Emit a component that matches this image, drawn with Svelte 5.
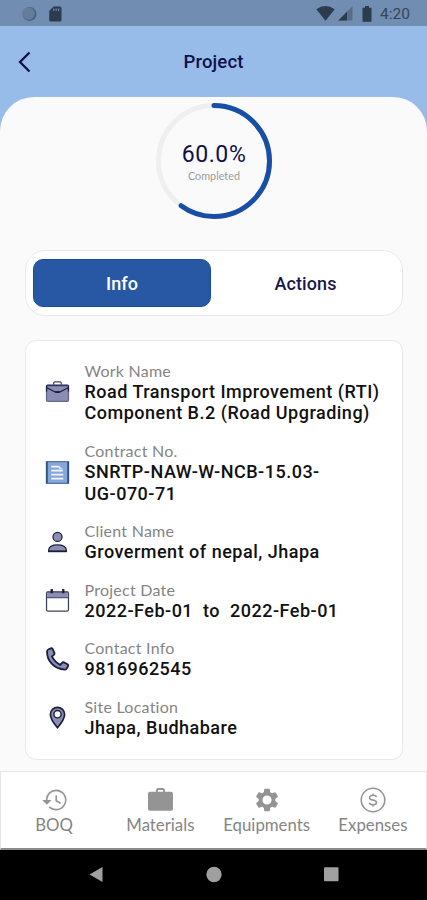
<script>
  let activeTab = $state("info");

  const progress = 60;
  const radius = 55.5;
  const circumference = 2 * Math.PI * radius;

  const details = [
    { icon: "work", label: "Work Name", lines: ["Road Transport Improvement (RTI)", "Component B.2 (Road Upgrading)"] },
    { icon: "contract", label: "Contract No.", lines: ["SNRTP-NAW-W-NCB-15.03-", "UG-070-71"] },
    { icon: "client", label: "Client Name", lines: ["Groverment of nepal, Jhapa"] },
    { icon: "date", label: "Project Date", lines: ["2022-Feb-01  to  2022-Feb-01"] },
    { icon: "phone", label: "Contact Info", lines: ["9816962545"] },
    { icon: "pin", label: "Site Location", lines: ["Jhapa, Budhabare"] },
  ];

  const links = [
    { icon: "history", label: "BOQ" },
    { icon: "bag", label: "Materials" },
    { icon: "gear", label: "Equipments" },
    { icon: "dollar", label: "Expenses" },
  ];
</script>

<div class="screen">
  <div class="status-bar">
    <div class="status-left">
      <svg width="16" height="16" viewBox="0 0 16 16">
        <circle cx="8.5" cy="8" r="7" fill="#49617d" />
        <circle cx="7.5" cy="7.5" r="6.3" fill="#647d9b" />
      </svg>
      <svg width="13" height="16" viewBox="0 0 13 16">
        <path d="M4.5 .5H11Q12.5 .5 12.5 2V14Q12.5 15.5 11 15.5H1.7Q.2 15.5 .2 14V5Z" fill="#2d3c4c" />
        <path d="M4.8 2.5V5M7.2 2.5V5M9.6 2.5V5" stroke="#6f89aa" stroke-width="1.2" />
      </svg>
    </div>
    <div class="status-right">
      <svg class="wifi" width="19" height="15" viewBox="0 0 19 15">
        <path d="M.3 3.2Q9.5-3 18.7 3.2L9.5 14.8Z" fill="#2d3c4c" />
      </svg>
      <svg class="signal" width="15" height="15" viewBox="0 0 15 15">
        <path d="M14.5 .3V14.5H.3Z" fill="#576f8d" />
        <path d="M9 5.8V14.5H.3Z" fill="#2d3c4c" />
      </svg>
      <svg class="battery" width="10" height="16" viewBox="0 0 10 16">
        <path d="M3 0H7V1.7H9.5V15.7H.5V1.7H3Z" fill="#2d3c4c" />
      </svg>
      <span>4:20</span>
    </div>
  </div>

  <header>
    <button class="back" aria-label="Back">
      <svg width="14" height="22" viewBox="0 0 14 22">
        <path d="M11.5 1.5L2 11L11.5 20.5" fill="none" stroke="#10104c" stroke-width="2.3" />
      </svg>
    </button>
    <h1>Project</h1>
  </header>

  <main>
    <div class="progress">
      <svg width="118" height="118" viewBox="0 0 118 118">
        <circle cx="59" cy="59" r={radius} fill="none" stroke="#efefef" stroke-width="5" />
        <circle
          cx="59"
          cy="59"
          r={radius}
          fill="none"
          stroke="#174ea6"
          stroke-width="5"
          stroke-linecap="round"
          stroke-dasharray="{(circumference * progress) / 100} {circumference}"
          transform="rotate(-90 59 59)"
        />
      </svg>
      <div class="progress-text">
        <strong>{progress.toFixed(1)}%</strong>
        <span>Completed</span>
      </div>
    </div>

    <div class="tabs">
      <button class:active={activeTab === "info"} onclick={() => (activeTab = "info")}>Info</button>
      <button class:active={activeTab === "actions"} onclick={() => (activeTab = "actions")}>Actions</button>
    </div>

    <section class="card">
      {#each details as item}
        <div class="row">
          <svg width="25" height="25" viewBox="0 0 26 26" fill="#8b8db5" stroke="#1d1e3c" stroke-width="1.3">
            {#if item.icon === "work"}
              <path d="M9 5V3.5Q9 2 10.5 2H15.5Q17 2 17 3.5V5" fill="none" stroke="#44465f" />
              <rect x="1.6" y="5.2" width="22.8" height="17" rx="1.5" stroke="#62648c" />
              <path d="M1.6 5.7H24.4" stroke="#34365a" stroke-width="1.6" />
              <path d="M2 8L10.5 12.5M15.5 12.5L24 8" fill="none" />
              <path d="M10.5 12.5H15.5" stroke-width="2" />
              <path d="M1.6 6V12M24.4 6V12" />
            {:else if item.icon === "contract"}
              <rect x="1.5" y="1.7" width="23" height="22.6" fill="#85a7da" stroke="#56749f" />
              <path d="M2 2V24M24 2V24" stroke="#304d79" stroke-width="1.7" />
              <path d="M6.5 7H14.5M6.5 11H18.5M6.5 15.2H19M6.5 19.4H19" stroke="#f1f6ff" stroke-width="1.8" />
              <path d="M14.5 6L18.5 9.5H14.5Z" fill="#dce9fc" stroke="none" />
            {:else if item.icon === "client"}
              <circle cx="13" cy="7.2" r="4.7" />
              <path d="M3.8 22.3V20.8Q4.3 15.5 13 15.5T22.2 20.8V22.3Z" />
              <path d="M3.2 22.2H22.8" stroke-width="1.8" />
            {:else if item.icon === "date"}
              <rect x="1.6" y="4" width="22.8" height="20" rx="1.4" fill="#fff" stroke="#40425a" />
              <path d="M2.2 4.7H23.8V9.7H2.2Z" stroke="none" />
              <path d="M2 4.3H24M2 10H24" stroke="#535575" />
              <path d="M7 1V5.5M19 1V5.5" stroke-width="2.4" />
            {:else if item.icon === "phone"}
              <path d="M3.4 2.6L6 1.4Q7.3 .9 7.9 2L9.8 6.4Q10.1 7.3 9.4 8L7.2 9.8Q9.9 15.5 15.8 18.6L18 16.2Q18.7 15.6 19.6 16L23.4 18Q24.5 18.8 24 19.8L22.6 22.5Q22 23.6 20.8 23.5C8.6 22.8 1.6 13.5 2.2 4.2Q2.3 3 3.4 2.6Z" stroke-width="1.9" />
            {:else}
              <path d="M13 23.6Q5.6 14.8 5.6 9.8A7.4 7.4 0 0 1 20.4 9.8Q20.4 14.8 13 23.6Z" stroke-width="1.7" />
              <circle cx="13" cy="9.6" r="3.8" fill="#fff" stroke-width="1.5" />
            {/if}
          </svg>
          <div class="row-text">
            <span class="label">{item.label}</span>
            {#each item.lines as line}
              <span class="value">{line}</span>
            {/each}
          </div>
        </div>
      {/each}
    </section>
  </main>

  <nav>
    {#each links as link}
      <button>
        <svg width="28" height="28" viewBox="0 0 24 24" fill="#949494">
          {#if link.icon === "history"}
            <path d="M13.9 3A9 9 0 0 0 4.9 12H1.9L5.9 16L9.9 12H6.4A7.5 7.5 0 1 1 8.5 17.3L7.4 18.4A9 9 0 1 0 13.9 3ZM13.2 8V13L17.2 15.4L17.9 14.2L14.6 12.2V8Z" />
          {:else if link.icon === "bag"}
            <path d="M21.4 5H16.2V3L15 1.7H9.8L8.6 3V5H3.4Q1.7 5 1.7 6.7V19.4Q1.7 21.2 3.4 21.2H21.4Q23.1 21.2 23.1 19.4V6.7Q23.1 5 21.4 5ZM10.2 5V3.4H14.6V5Z" />
          {:else if link.icon === "gear"}
            <path d="M19.14 12.94c.04-.3.06-.61.06-.94s-.02-.64-.07-.94l2.03-1.58a.49.49 0 0 0 .12-.61l-1.92-3.32a.49.49 0 0 0-.59-.22l-2.39.96a7.03 7.03 0 0 0-1.62-.94l-.36-2.54A.48.48 0 0 0 13.92 2.4h-3.84a.48.48 0 0 0-.47.41l-.36 2.54c-.59.24-1.13.57-1.62.94l-2.39-.96a.48.48 0 0 0-.59.22L2.74 8.87a.47.47 0 0 0 .12.61l2.03 1.58a7.2 7.2 0 0 0 0 1.88l-2.03 1.58a.49.49 0 0 0-.12.61l1.92 3.32c.12.22.37.29.59.22l2.39-.96c.5.38 1.03.7 1.62.94l.36 2.54c.05.24.24.41.48.41h3.84c.24 0 .44-.17.47-.41l.36-2.54a7 7 0 0 0 1.62-.94l2.39.96c.22.08.47 0 .59-.22l1.92-3.32a.47.47 0 0 0-.12-.61ZM12 15.9A3.9 3.9 0 1 1 12 8.1A3.9 3.9 0 0 1 12 15.9Z" />
          {:else}
            <g fill="none" stroke="#949494" stroke-width="1.3">
              <circle cx="12" cy="12" r="10.1" />
              <path d="M15 9.4Q14.5 8 12 8T9 10Q9 11.5 12 12T15 14.2Q15 16 12 16T8.9 14.4M12 6.4V8M12 16V17.6" />
            </g>
          {/if}
        </svg>
        <span>{link.label}</span>
      </button>
    {/each}
  </nav>

  <div class="system-bar">
    <svg width="427" height="50" viewBox="0 0 427 50" fill="#a0a0a0">
      <path d="M89.5 24.5L102.5 17V32Z" />
      <circle cx="214" cy="24.5" r="7.7" />
      <rect x="324" y="17.2" width="14.5" height="14" rx="1" />
    </svg>
  </div>
</div>

<style>
  :global(body) {
    margin: 0;
    background: #97bce9;
  }

  .screen {
    width: 427px;
    height: 900px;
    display: flex;
    flex-direction: column;
    overflow: hidden;
    background: #97bce9;
    font-family: Roboto, sans-serif;
    font-variant-ligatures: none;
  }

  button {
    border: none;
    background: none;
    padding: 0;
    font-family: inherit;
    cursor: pointer;
  }

  svg {
    display: block;
    flex-shrink: 0;
  }

  /* Status bar */
  .status-bar {
    height: 26px;
    flex-shrink: 0;
    display: flex;
    justify-content: space-between;
    align-items: center;
    box-sizing: border-box;
    padding: 1px 17px 0 21px;
    background: #718db1;
  }

  .status-left,
  .status-right {
    display: flex;
    align-items: center;
  }

  .status-left {
    gap: 12px;
  }

  .signal {
    margin-left: 3px;
  }

  .battery {
    margin-left: 9px;
  }

  .status-right span {
    margin-left: 8px;
    font-size: 15.5px;
    line-height: 26px;
    color: #34465b;
  }

  /* Header */
  header {
    height: 71px;
    flex-shrink: 0;
    display: grid;
    grid-template-columns: 50px 1fr 50px;
    align-items: center;
  }

  .back {
    padding-left: 18px;
  }

  h1 {
    margin: 0;
    text-align: center;
    font-size: 18.6px;
    font-weight: 500;
    letter-spacing: 0.1px;
    color: #10104c;
  }

  main {
    flex: 1;
    display: flex;
    flex-direction: column;
    padding: 5px 24px 0 25px;
    border-radius: 34px 34px 0 0;
    background: #fafafa;
  }

  /* Progress ring */
  .progress {
    display: grid;
    place-items: center;
    height: 118px;
  }

  .progress > * {
    grid-area: 1 / 1;
  }

  .progress-text {
    display: flex;
    flex-direction: column;
    align-items: center;
    padding-top: 2px;
  }

  .progress-text strong {
    font-size: 23px;
    line-height: 28px;
    font-weight: 400;
    letter-spacing: 0.6px;
    color: #10104c;
  }

  .progress-text span {
    font-family: Lato, sans-serif;
    font-size: 10.8px;
    line-height: 14px;
    color: #9a9a9a;
  }

  /* Tabs */
  .tabs {
    height: 66px;
    box-sizing: border-box;
    margin-top: 30px;
    padding: 8px 7px;
    display: flex;
    border: 1px solid #e9e9e9;
    border-radius: 20px;
    background: #fff;
  }

  .tabs button {
    width: 178px;
    border-radius: 10px;
    font-size: 18px;
    font-weight: 500;
    letter-spacing: 0.1px;
    color: #1b1748;
  }

  .tabs button + button {
    flex: 1;
    margin-left: 5px;
  }

  .tabs button.active {
    border: 1px solid #174ea6;
    background: #2858a3;
    color: #fff;
  }

  /* Project details */
  .card {
    height: 420px;
    box-sizing: border-box;
    margin-top: 24px;
    padding: 20px 16px 0 19px;
    display: flex;
    flex-direction: column;
    gap: 17.1px;
    border: 1px solid #e9e9e9;
    border-radius: 11px;
    background: #fff;
  }

  .row {
    display: flex;
    align-items: center;
    gap: 14.5px;
  }

  .row-text {
    display: flex;
    flex-direction: column;
    white-space: pre;
  }

  .label {
    font-family: Lato, sans-serif;
    font-size: 16px;
    line-height: 19.7px;
    letter-spacing: 0.25px;
    color: #858585;
  }

  .value {
    font-size: 18px;
    line-height: 21.7px;
    font-weight: 500;
    letter-spacing: 0.5px;
    color: #111;
  }

  /* Bottom navigation */
  nav {
    height: 79px;
    flex-shrink: 0;
    box-sizing: border-box;
    display: grid;
    grid-template-columns: repeat(4, 1fr);
    border: 1px solid #e6e6e6;
    border-bottom: 2px solid #8a8a8a;
    background: #fff;
  }

  nav button {
    display: flex;
    flex-direction: column;
    align-items: center;
    padding-top: 14px;
  }

  nav span {
    font-family: Lato, sans-serif;
    font-size: 16.8px;
    line-height: 22px;
    color: #858585;
  }

  .system-bar {
    height: 50px;
    flex-shrink: 0;
    background: #000;
  }
</style>
